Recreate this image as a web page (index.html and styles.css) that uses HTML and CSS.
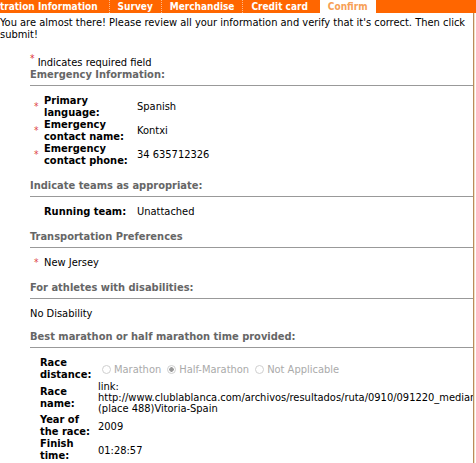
FILE: index.html
```html
<!DOCTYPE html>
<html lang="en">
<head>
    <meta charset="UTF-8">
    <title>Confirm Registration</title>
    <link rel="stylesheet" href="styles.css">
</head>
<body>
    <div class="tabs">
        <span class="tab first sep">tration Information</span>
        <span class="tab sep">Survey</span>
        <span class="tab sep">Merchandise</span>
        <span class="tab">Credit card</span>
        <span class="tab current">Confirm</span>
    </div>

    <div class="page">
        <p class="intro">You are almost there! Please review all your information and verify that it's correct. Then click submit!</p>

        <div class="form">
            <div class="required"><span class="req-top">*</span> Indicates required field</div>

            <h3 class="section first">Emergency Information:</h3>
            <div class="fields">
                <span class="req">*</span>
                <span class="label">Primary language:</span>
                <span class="value">Spanish</span>

                <span class="req">*</span>
                <span class="label">Emergency contact name:</span>
                <span class="value">Kontxi</span>

                <span class="req">*</span>
                <span class="label">Emergency contact phone:</span>
                <span class="value">34 635712326</span>
            </div>

            <h3 class="section">Indicate teams as appropriate:</h3>
            <div class="fields">
                <span class="req"></span>
                <span class="label">Running team:</span>
                <span class="value">Unattached</span>
            </div>

            <h3 class="section">Transportation Preferences</h3>
            <div class="fields">
                <span class="req">*</span>
                <span class="value wide">New Jersey</span>
            </div>

            <h3 class="section">For athletes with disabilities:</h3>
            <p class="plain">No Disability</p>

            <h3 class="section">Best marathon or half marathon time provided:</h3>
            <div class="race">
                <span class="label">Race distance:</span>
                <span class="value radios">
                    <label><input type="radio" name="dist" disabled> Marathon</label>
                    <label><input type="radio" name="dist" disabled checked> Half-Marathon</label>
                    <label><input type="radio" name="dist" disabled> Not Applicable</label>
                </span>

                <span class="label">Race name:</span>
                <span class="value">link: http://www.clublablanca.com/archivos/resultados/ruta/0910/091220_mediamaraton.pdf (place 488)Vitoria-Spain</span>

                <span class="label">Year of the race:</span>
                <span class="value">2009</span>

                <span class="label">Finish time:</span>
                <span class="value">01:28:57</span>
            </div>
        </div>
    </div>
</body>
</html>
```
FILE: styles.css
```css
body {
    margin: 0;
    font-family: "DejaVu Sans", sans-serif;
    font-size: 11px;
    font-stretch: condensed;
    line-height: 12px;
    color: #000;
    background: #fff;
}
.tabs {
    display: flex;
    height: 13px;
    line-height: 13px;
    background: #f60;
    color: #fff;
    font-size: 10px;
    font-weight: bold;
    white-space: nowrap;
    overflow: hidden;
}
.tab {
    padding: 0 8px;
}
.tab.first {
    padding-left: 0;
    padding-right: 11px;
}
.tab.sep {
    border-right: 1px dotted #fdb88a;
}
.tab.current {
    background: #fff;
    color: #f7a055;
    margin-left: 4px;
}
.page {
    width: 473px;
    min-height: 450px;
    border-right: 1px solid #b98c5c;
    box-shadow: 1px 0 0 #f1e2c8;
    overflow: hidden;
}
.intro {
    margin: 4px 0 0;
}
.form {
    margin: 12px 0 0 30px;
}
.required {
    line-height: 12px;
}
.req-top {
    color: #d33;
    font-size: 10px;
    vertical-align: 4px;
}
.section {
    margin: 13px 0 0;
    padding-bottom: 4px;
    border-bottom: 1px solid #999;
    font-size: 11px;
    line-height: 12px;
    color: #666;
}
.section.first {
    margin-top: 0;
}
.fields {
    display: grid;
    grid-template-columns: 10px 93px minmax(0, 1fr);
    align-items: center;
    margin-top: 9px;
    padding-left: 4px;
}
.req {
    color: #d44;
    font-size: 10px;
}
.label {
    font-weight: bold;
}
.value.wide {
    grid-column: span 2;
}
.plain {
    margin: 9px 0 -2px;
}
.race {
    display: grid;
    grid-template-columns: 58px minmax(0, 1fr);
    align-items: center;
    margin-top: 9px;
    padding-left: 10px;
}
.race .value {
    line-height: 11px;
}
.radios {
    display: flex;
    gap: 6px;
    margin-left: 4px;
    color: #aaa;
    white-space: nowrap;
}
.radios label {
    display: flex;
    align-items: center;
    gap: 3px;
}
.radios input {
    appearance: none;
    width: 9px;
    height: 9px;
    margin: 0;
    border: 1px solid #cfcfcf;
    border-radius: 50%;
    background: #fff;
}
.radios input:checked {
    background: radial-gradient(circle, #999 0 2px, #fff 2.5px);
}
```
